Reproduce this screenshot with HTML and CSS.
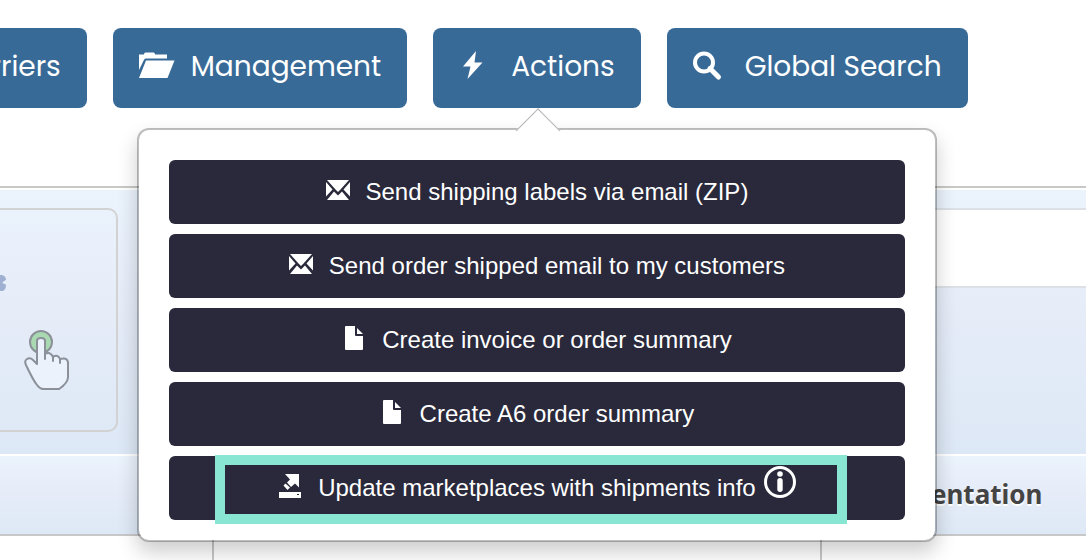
FILE: index.html
```html
<!DOCTYPE html>
<html lang="en">
<head>
    <meta charset="UTF-8">
    <meta name="viewport" content="width=device-width, initial-scale=1.0">
    <title>Orders</title>
    <link rel="stylesheet" href="styles.css">
</head>
<body>
    <header class="topbar">
        <nav class="menu">
            <div class="menu-item">
                <button class="btn-menu" type="button">Carriers</button>
            </div>
            <div class="menu-item">
                <button class="btn-menu" type="button">
                    <svg class="glyph" viewBox="0 0 28 28" aria-hidden="true">
                        <path d="M0 3.500h5c0-1.500 1-2 2-2h7c1 0 2 .5 2 2h12v4H7.500C6 7.500 5.300 8.100 4.800 9.300L0 19z"/>
                        <path d="M7 9.500H35.500L28.500 27H0z"/>
                    </svg>
                    <span>Management</span>
                </button>
            </div>
            <div class="menu-item">
                <button class="btn-menu" type="button" aria-expanded="true">
                    <svg class="glyph" viewBox="0 0 28 28" aria-hidden="true">
                        <path d="M17 0L4 15.500h7.500L8.500 28L23.500 11.500h-8z"/>
                    </svg>
                    <span>Actions</span>
                </button>
                <div class="popover">
                    <button class="btn-action" type="button">
                        <svg class="icon" viewBox="0 0 24 24" aria-hidden="true">
                            <path d="M1 2h22L14.500 11.500L12 14L9.500 11.500z"/>
                            <path d="M0 4l6.500 7.500L0 18.500zM24 4l-6.500 7.500l6.500 7z"/>
                            <path d="M1 22L8 13.500L12 17.500l4-4L23 22z"/>
                        </svg>
                        <span>Send shipping labels via email (ZIP)</span>
                    </button>
                    <button class="btn-action" type="button">
                        <svg class="icon" viewBox="0 0 24 24" aria-hidden="true">
                            <path d="M1 2h22L14.500 11.500L12 14L9.500 11.500z"/>
                            <path d="M0 4l6.500 7.500L0 18.500zM24 4l-6.500 7.500l6.500 7z"/>
                            <path d="M1 22L8 13.500L12 17.500l4-4L23 22z"/>
                        </svg>
                        <span>Send order shipped email to my customers</span>
                    </button>
                    <button class="btn-action" type="button">
                        <svg class="icon" viewBox="0 0 24 24" aria-hidden="true">
                            <path d="M4 0h9v9q0 1 1 1h7v13q0 1-1 1H4q-1 0-1-1V1q0-1 1-1z"/>
                            <path d="M15 2l6 6h-6z"/>
                        </svg>
                        <span>Create invoice or order summary</span>
                    </button>
                    <button class="btn-action" type="button">
                        <svg class="icon" viewBox="0 0 24 24" aria-hidden="true">
                            <path d="M4 0h9v9q0 1 1 1h7v13q0 1-1 1H4q-1 0-1-1V1q0-1 1-1z"/>
                            <path d="M15 2l6 6h-6z"/>
                        </svg>
                        <span>Create A6 order summary</span>
                    </button>
                    <button class="btn-action highlighted" type="button">
                        <svg class="icon" viewBox="0 0 24 24" aria-hidden="true">
                            <path d="M7 0h14v13.500l-4-4l-4 3.500l-4-4.500l3-3z"/>
                            <path d="M7.500 9.500l4.500 4l-2.500 2.500l-4-4.500z"/>
                            <path fill-rule="evenodd" d="M1 18h22v6H1zM19 20v1h2v-1z"/>
                        </svg>
                        <span>Update marketplaces with shipments info</span>
                        <svg class="icon-info" viewBox="0 0 32 32" aria-hidden="true">
                            <circle cx="16" cy="16" r="14.500" fill="none" stroke="currentColor" stroke-width="3"/>
                            <circle cx="16" cy="8" r="2.800"/>
                            <rect x="13.300" y="12" width="5.400" height="14" rx="2.700"/>
                        </svg>
                    </button>
                </div>
            </div>
            <div class="menu-item">
                <button class="btn-menu" type="button">
                    <svg class="glyph" viewBox="0 0 28 28" aria-hidden="true">
                        <circle cx="11" cy="11.500" r="9" fill="none" stroke="currentColor" stroke-width="4"/>
                        <path d="M17 17.500l8.500 8.500" stroke="currentColor" stroke-width="5" stroke-linecap="round"/>
                    </svg>
                    <span>Global Search</span>
                </button>
            </div>
        </nav>
    </header>

    <main>
        <section class="filters">
            <div class="card">
                <svg class="gear" viewBox="0 0 8 16" aria-hidden="true">
                    <path d="M0 0h2q4 1 4 5q-3 1-3.500 2.500q.5 1.500 3.500 2q0 5-3 6.500H0z"/>
                </svg>
                <svg class="hand" viewBox="0 0 46 60" aria-hidden="true">
                    <circle class="hand-dot" cx="17" cy="12" r="11"/>
                    <path d="M13 34V11q0-3 4-3t4 3v13q5-3 8 3q5-3 7 2q7-2 8 3v15q0 6-9 12H19q-3 0-6-4Q9 50 2 35q-2-4 1-6q3-2 6 1z"/>
                    <path d="M21 22v7M29 26v5M36 29v4"/>
                </svg>
            </div>
            <div class="panel"></div>
        </section>

        <table class="orders">
            <colgroup>
                <col class="col-order">
                <col class="col-product">
                <col>
            </colgroup>
            <thead>
                <tr>
                    <th></th>
                    <th></th>
                    <th>Documentation</th>
                </tr>
            </thead>
            <tbody>
                <tr>
                    <td></td>
                    <td></td>
                    <td></td>
                </tr>
            </tbody>
        </table>
    </main>
</body>
</html>
```
FILE: styles.css
```css
* {
    box-sizing: border-box;
}
body {
    margin: 0;
    background-color: #fff;
    font-family: "Liberation Sans", Arial, sans-serif;
    overflow: hidden;
}
button {
    border: 0;
    color: #fff;
    cursor: pointer;
}
svg {
    flex: none;
    fill: currentColor;
    overflow: visible;
}

/* top menu */
.topbar {
    height: 188px;
    padding-top: 28px;
    border-bottom: 2px solid #c8c8c8;
}
.menu {
    display: flex;
    gap: 26px;
    margin-left: -76px;
}
.menu-item {
    position: relative;
    flex: none;
}
.btn-menu {
    display: flex;
    align-items: center;
    gap: 24px;
    height: 80px;
    padding: 0 26px 2px;
    border-radius: 8px;
    background-color: #386a98;
    font-family: Poppins, Inter, sans-serif;
    font-size: 28px;
}
.glyph {
    width: 28px;
    height: 28px;
    margin-bottom: 4px;
}

/* actions dropdown */
.popover {
    position: absolute;
    z-index: 10;
    top: 100px;
    left: 50%;
    width: 800px;
    transform: translateX(-50%);
    display: flex;
    flex-direction: column;
    gap: 10px;
    padding: 30px 30px 20px;
    background-color: #fff;
    background-clip: padding-box;
    border: 2px solid rgba(0, 0, 0, 0.25);
    border-radius: 12px;
    box-shadow: 0 10px 20px rgba(0, 0, 0, 0.2);
}
.popover::before {
    content: "";
    position: absolute;
    top: -15px;
    left: calc(50% - 15px);
    width: 30px;
    height: 30px;
    background-color: #fff;
    border: 1px solid #b4b4b4;
    border-right-color: transparent;
    border-bottom-color: transparent;
    transform: rotate(45deg);
}
.btn-action {
    position: relative;
    display: flex;
    justify-content: center;
    align-items: center;
    gap: 16px;
    height: 64px;
    border-radius: 6px;
    background-color: #29293b;
    font-family: "Liberation Sans", Arial, sans-serif;
    font-size: 24px;
}
.icon {
    width: 24px;
    height: 24px;
    margin-bottom: 4px;
}
.icon-info {
    width: 32px;
    height: 32px;
    margin: 0 0 12px -8px;
}
.highlighted::after {
    content: "";
    position: absolute;
    top: -1px;
    right: 58px;
    bottom: -4px;
    left: 46px;
    border: 10px solid #88e6d3;
}

/* filter area */
.filters {
    display: flex;
    align-items: flex-start;
    height: 268px;
    padding: 18px 0;
    border-top: 2px solid #fff;
    border-bottom: 2px solid #fff;
    background: linear-gradient(#ebf3fd, #e5ecf8 50%, #dde8f6) padding-box;
}
.card {
    display: flex;
    flex-direction: column;
    width: 118px;
    height: 224px;
    padding-top: 65px;
    border: 2px solid #d2d2d2;
    border-left: 0;
    border-radius: 0 10px 10px 0;
}
.gear {
    width: 8px;
    height: 16px;
    color: #9fb0d2;
}
.hand {
    width: 46px;
    height: 60px;
    margin: 39px 0 0 24px;
    fill: #ebf2fb;
    stroke: #8b9099;
    stroke-width: 2;
    stroke-linejoin: round;
    stroke-linecap: round;
}
.hand-dot {
    fill: #a9d9b1;
}
.panel {
    flex: 1;
    height: 80px;
    margin-left: 100px;
    background-color: #fff;
    border: 2px solid #dde1e6;
    border-right: 0;
}

/* orders table */
.orders {
    width: 100%;
    table-layout: fixed;
    border-spacing: 0;
}
.col-order {
    width: 212px;
}
.col-product {
    width: 608px;
}
.orders thead {
    background: linear-gradient(#ebf3fd, #e5ecf8 50%, #dde8f6);
}
.orders th {
    height: 80px;
    padding: 0 0 2px 20px;
    border-bottom: 2px solid #c8c8c8;
    color: #444;
    font-family: "Noto Sans", sans-serif;
    font-size: 26px;
    text-align: left;
    text-shadow: 0 2px 0 #fff;
}
.orders td {
    height: 24px;
    padding: 0;
}
.orders td + td {
    border-left: 2px solid #c8c8c8;
}
```
